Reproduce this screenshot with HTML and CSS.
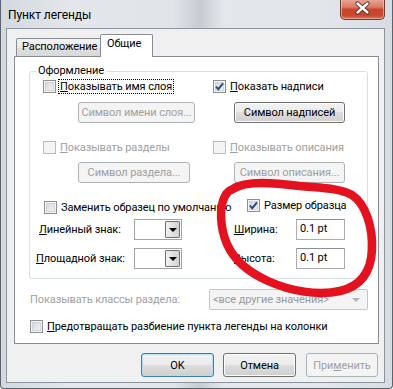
FILE: index.html
```html
<!DOCTYPE html>
<html lang="ru">
<head>
<meta charset="utf-8">
<title>Пункт легенды</title>
<link rel="stylesheet" href="styles.css">
</head>
<body>
<div class="window">
  <div class="titlebar">
    <span class="title">Пункт легенды</span>
    <div class="close">
      <svg width="45" height="21" viewBox="0 0 45 21">
        <path d="M17.5 5.5 L27.5 14.5 M27.5 5.5 L17.5 14.5" stroke="#4a2a24" stroke-width="4.2" stroke-linecap="round"/>
        <path d="M17.5 5.5 L27.5 14.5 M27.5 5.5 L17.5 14.5" stroke="#ffffff" stroke-width="2.4" stroke-linecap="round"/>
      </svg>
    </div>
  </div>
  <div class="client">
    <div class="tabs">
      <div class="tab">Расположение</div>
      <div class="tab active">Общие</div>
    </div>
    <div class="panel">
      <fieldset class="group">
        <legend>Оформление</legend>
        <div class="row r1">
          <div class="cell-l">
            <label class="cb"><span class="box"></span><span class="txt focus"><u>П</u>оказывать имя слоя</span></label>
          </div>
          <div class="cell-r">
            <label class="cb"><span class="box checked"><svg width="11" height="11" viewBox="0 0 11 11"><path d="M2 5.6 L4.3 8.2 L9 2.3" fill="none" stroke="#2d4584" stroke-width="1.9"/></svg></span><span class="txt"><u>П</u>оказать надписи</span></label>
          </div>
        </div>
        <div class="row r2">
          <div class="cell-l"><span class="btn dis btn-name">Символ имени слоя...</span></div>
          <div class="cell-r"><span class="btn btn-lbl">Символ надписей</span></div>
        </div>
        <div class="row r3">
          <div class="cell-l">
            <label class="cb dis"><span class="box"></span><span class="txt"><u>П</u>оказывать разделы</span></label>
          </div>
          <div class="cell-r">
            <label class="cb dis"><span class="box"></span><span class="txt"><u>П</u>оказывать описания</span></label>
          </div>
        </div>
        <div class="row r4">
          <div class="cell-l"><span class="btn dis btn-sec">Символ раздела...</span></div>
          <div class="cell-r"><span class="btn dis btn-lbl">Символ описания...</span></div>
        </div>
        <div class="row r5">
          <div class="cell-l">
            <label class="cb replace"><span class="box"></span><span class="txt">Заменить образец по умолчанию</span></label>
          </div>
          <div class="cell-r">
            <label class="cb size"><span class="box checked"><svg width="11" height="11" viewBox="0 0 11 11"><path d="M2 5.6 L4.3 8.2 L9 2.3" fill="none" stroke="#2d4584" stroke-width="1.9"/></svg></span><span class="txt">Размер образца</span></label>
          </div>
        </div>
        <div class="row r6">
          <div class="cell-l field">
            <span class="flabel lin"><u>Л</u>инейный знак:</span>
            <span class="sym"><span class="drop"><i class="tri"></i></span></span>
          </div>
          <div class="cell-r field">
            <span class="flabel rlab"><u>Ш</u>ирина:</span>
            <span class="tbox">0.1 pt</span>
          </div>
        </div>
        <div class="row r7">
          <div class="cell-l field">
            <span class="flabel area"><u>П</u>лощадной знак:</span>
            <span class="sym"><span class="drop"><i class="tri"></i></span></span>
          </div>
          <div class="cell-r field">
            <span class="flabel rlab"><u>В</u>ысота:</span>
            <span class="tbox">0.1 pt</span>
          </div>
        </div>
      </fieldset>
      <div class="classes">
        <span class="clabel">Показывать классы раздела:</span>
        <span class="dcombo"><span>&lt;все другие значения&gt;</span><i class="tri gray"></i></span>
      </div>
      <div class="prevent">
        <label class="cb"><span class="box"></span><span class="txt"><u>П</u>редотвращать разбиение пункта легенды на колонки</span></label>
      </div>
    </div>
    <div class="buttons">
      <span class="btn dlg def">OK</span>
      <span class="btn dlg cancel">Отмена</span>
      <span class="btn dlg dis apply">При<u>м</u>енить</span>
    </div>
  </div>
  <svg class="scribble" width="393" height="389" viewBox="0 0 393 389">
    <path d="M233 189 C 246 180, 275 183, 300 186 C 322 188, 340 188, 352 195 C 366 204, 373 228, 372 250 C 371 270, 362 286, 340 291 C 318 296, 290 291, 268 281 C 248 272, 234 260, 227 244 C 220 228, 219 207, 225 196 C 227 192, 230 190, 233 189 Z" fill="none" stroke="#e3121e" stroke-width="8.5" stroke-linejoin="round" stroke-linecap="round"/>
  </svg>
</div>
</body>
</html>
```
FILE: styles.css
```css
* { box-sizing: border-box; }
html, body { margin: 0; padding: 0; }
body {
  width: 393px;
  height: 389px;
  overflow: hidden;
  background: #ffffff;
  font-family: Roboto, "Noto Sans", sans-serif;
  font-size: 11px;
  letter-spacing: -0.1px;
  color: #000;
}
u { text-decoration: underline; text-underline-offset: 1px; }

.window {
  position: relative;
  width: 393px;
  height: 389px;
  border: 1px solid #5b636c;
  border-top: none;
  border-radius: 0 0 4px 4px;
  padding: 0 7px 5px 5px;
  display: flex;
  flex-direction: column;
  background: linear-gradient(90deg, #d3d9df 0%, #e3e7eb 18%, #e1e5e9 44%, #c6ccd2 51%, #e4e8ec 57%, #e3e7eb 82%, #d6dce2 100%);
}

.titlebar {
  height: 28px;
  display: flex;
  justify-content: space-between;
  align-items: flex-start;
  flex: none;
}
.title {
  padding: 7px 0 0 2px;
  line-height: 16px;
  font-size: 12px;
  letter-spacing: -0.1px;
  color: #000;
}
.close {
  width: 45px;
  height: 21px;
  margin-top: -1px;
  border: 1px solid #6b3a30;
  border-top: none;
  border-radius: 0 0 5px 5px;
  background: linear-gradient(#e9a99a 0%, #dd7b64 40%, #c9472d 52%, #c8482c 80%, #d9705a 100%);
  box-shadow: inset 0 0 0 1px rgba(255, 210, 200, 0.55);
  overflow: hidden;
}
.close svg { display: block; margin: -1px 0 0 -1px; }

.client {
  flex: 1;
  border: 1px solid #8b939c;
  background: #f0f0f0;
  padding: 5px 5px 0 7px;
  display: flex;
  flex-direction: column;
}

.tabs {
  height: 22px;
  display: flex;
  align-items: flex-end;
  padding-left: 2px;
  flex: none;
}
.tab {
  width: 86px;
  height: 18px;
  border: 1px solid #898c95;
  border-bottom: none;
  border-radius: 2px 2px 0 0;
  padding: 0 0 0 5px;
  line-height: 16px;
  white-space: nowrap;
  background: linear-gradient(#f3f3f3 0%, #ebebeb 50%, #dedede 50%, #d9d9d9 100%);
}
.tab.active {
  width: 53px;
  height: 23px;
  margin-bottom: -1px;
  margin-left: -2px;
  padding: 1px 0 0 6px;
  background: #ffffff;
  position: relative;
  z-index: 1;
}

.panel {
  height: 288px;
  border: 1px solid #898c95;
  background: #ffffff;
  padding: 7px 10px 0 14px;
  flex: none;
}

.group {
  margin: 0;
  border: 1px solid #d5dfe5;
  border-radius: 3px;
  padding: 0 0 9px 13px;
  min-width: 0;
}
.group legend {
  padding: 0 2px;
  margin-left: -7px;
  line-height: 14px;
}

.row { display: flex; }
.cell-l { width: 170px; flex: none; display: flex; align-items: center; }
.cell-r { flex: 1; display: flex; align-items: center; }

.r1 { height: 15px; margin-top: 1px; }
.r2 { height: 21px; margin-top: 8px; }
.r3 { height: 15px; margin-top: 17px; }
.r4 { height: 21px; margin-top: 7px; }
.r5 { height: 17px; margin-top: 15px; }
.r6 { height: 21px; margin-top: 4px; }
.r7 { height: 21px; margin-top: 8px; }

.r5 .cell-l { align-items: flex-end; }
.r5 .cell-r { align-items: flex-start; }

.cb { display: flex; align-items: center; white-space: nowrap; line-height: 13px; }
.cb .txt { margin-left: 2px; padding: 0 1px; border: 1px solid transparent; }
.cb .txt.focus { border: 1px dotted #000; }
.cb.dis .txt { color: #a0a0a0; }

.box {
  width: 13px;
  height: 13px;
  flex: none;
  border: 1px solid #8e8f8f;
  background: linear-gradient(135deg, #cdd0d5 0%, #e4e6e8 50%, #f6f6f6 100%);
  box-shadow: inset 0 0 0 1px #f4f4f4, inset 0 0 0 2px #d0d3d7;
  display: flex;
  align-items: center;
  justify-content: center;
}
.box.checked svg { display: block; }
.cb.dis .box {
  border-color: #bcbcbc;
  background: #f4f4f4;
  box-shadow: none;
}
.replace { margin-left: 1px; }
.size { margin-left: 34px; }

.btn {
  display: inline-flex;
  align-items: center;
  justify-content: center;
  height: 21px;
  border: 1px solid #707070;
  border-radius: 3px;
  background: linear-gradient(#f2f2f2 0%, #ebebeb 50%, #dddddd 50%, #cfcfcf 100%);
  box-shadow: inset 0 0 0 1px #fcfcfc;
  white-space: nowrap;
  line-height: 15px;
}
.btn.dis {
  border-color: #adb2b5;
  background: #f4f4f4;
  box-shadow: none;
  color: #a0a0a0;
}
.btn-name { margin-left: 35px; width: 117px; }
.btn-sec { margin-left: 35px; width: 112px; }
.btn-lbl { margin-left: 21px; width: 111px; }

.field { align-items: center; }
.flabel { white-space: nowrap; line-height: 15px; }
.lin { margin-left: -4px; width: 95px; }
.area { margin-left: -7px; width: 98px; }
.rlab { margin-left: 21px; width: 62px; }

.sym {
  width: 48px;
  height: 21px;
  border: 1px solid #a0a4aa;
  background: #ffffff;
  display: flex;
  justify-content: flex-end;
  padding: 1px;
}
.drop {
  width: 15px;
  height: 17px;
  border: 1px solid #707070;
  border-radius: 1px;
  background: linear-gradient(90deg, #f1f1f1 0%, #e2e2e2 50%, #d2d2d2 100%);
  display: flex;
  align-items: center;
  justify-content: center;
}
.tri {
  display: block;
  width: 0;
  height: 0;
  border-left: 4px solid transparent;
  border-right: 4px solid transparent;
  border-top: 4px solid #000;
}
.tri.gray { border-top-color: #b3b3b3; }

.tbox {
  width: 49px;
  height: 21px;
  border: 1px solid #abadb3;
  border-top-color: #8a8f98;
  background: #fff;
  padding: 1px 0 0 3px;
  line-height: 16px;
}

.classes {
  display: flex;
  align-items: center;
  height: 21px;
  margin-top: 10px;
}
.clabel { margin-left: 1px; width: 179px; color: #a0a0a0; white-space: nowrap; }
.dcombo {
  width: 159px;
  height: 21px;
  border: 1px solid #c2c5ca;
  border-radius: 2px;
  background: #f4f4f4;
  color: #9a9a9a;
  display: flex;
  align-items: center;
  justify-content: space-between;
  padding: 0 7px 0 3px;
  line-height: 15px;
}

.prevent { margin-top: 9px; height: 15px; display: flex; }
.prevent .cb { margin-left: 1px; }

.buttons {
  display: flex;
  justify-content: flex-end;
  margin-top: 9px;
  padding-right: 1px;
}
.btn.dlg { height: 24px; width: 73px; }
.cancel { margin-left: 9px; }
.apply { margin-left: 10px; width: 72px !important; color: #838383; }
.def {
  border-color: #3c7fb1;
  box-shadow: inset 0 0 0 1px #b3dcf5;
}

.scribble {
  position: absolute;
  left: -1px;
  top: 0;
  pointer-events: none;
}
```
